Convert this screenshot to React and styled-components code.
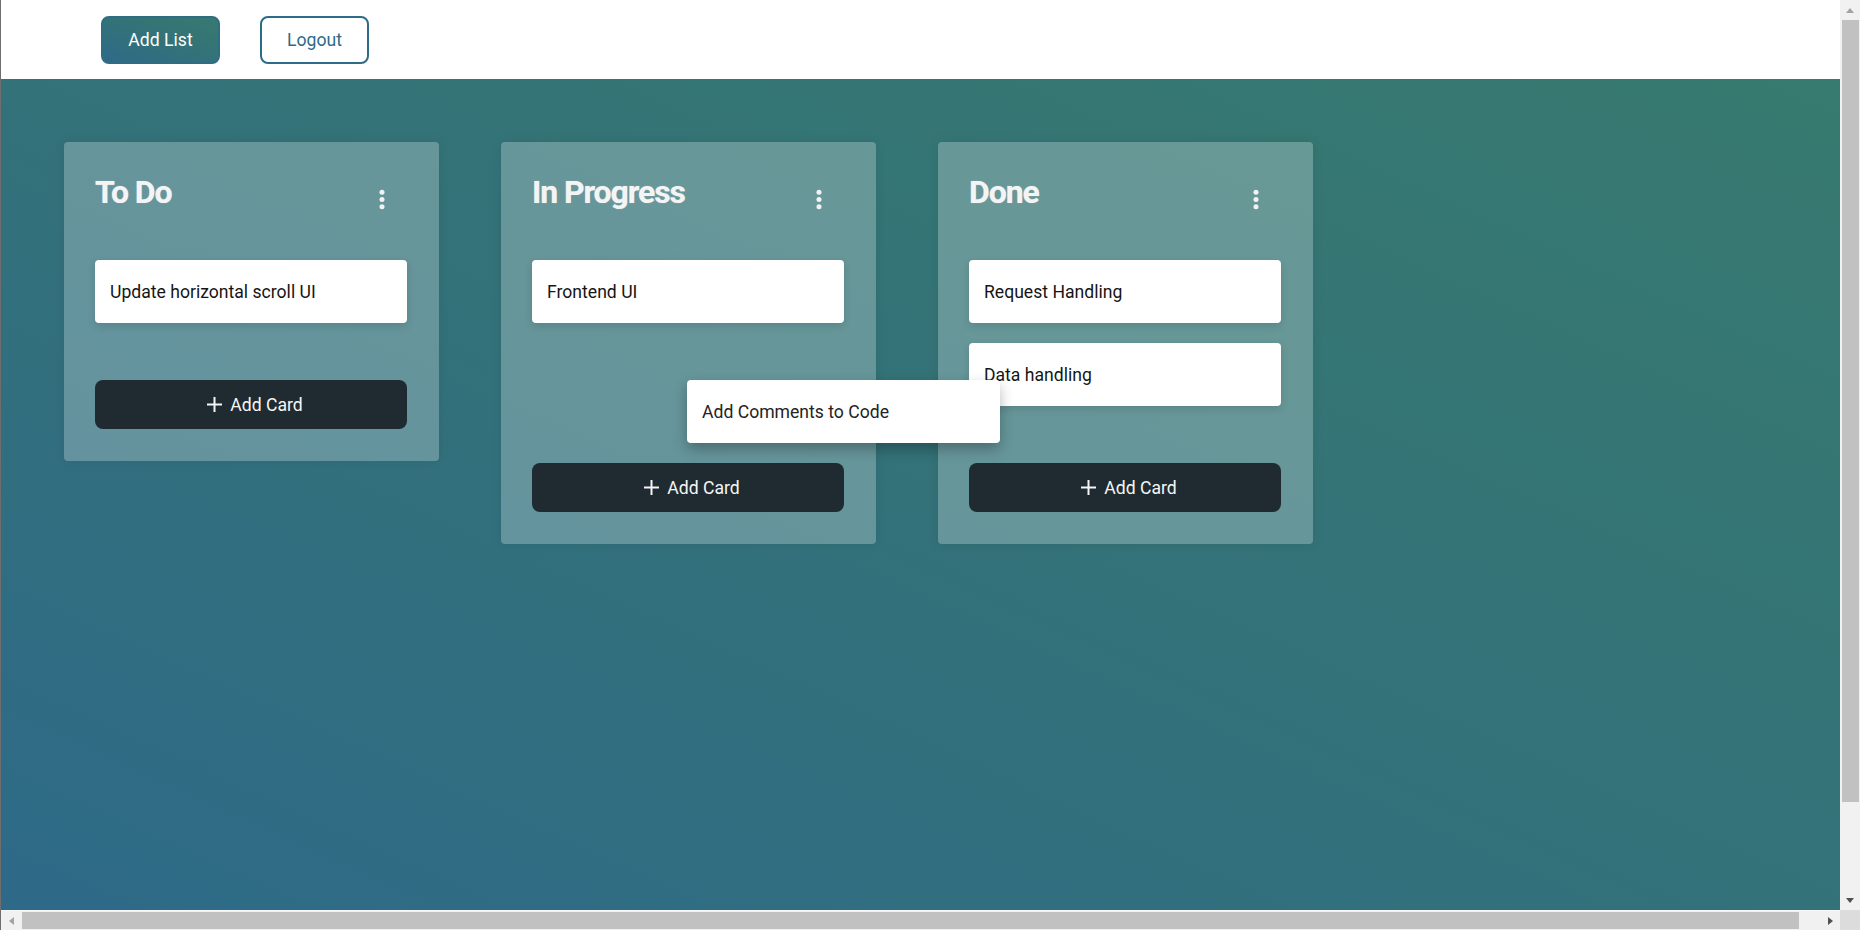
import React from "react";
import styled, { createGlobalStyle } from "styled-components";

const GlobalStyle = createGlobalStyle`
  html, body {
    margin: 0;
    padding: 0;
    overflow: hidden;
  }
  body {
    font-family: Roboto, "Liberation Sans", Arial, sans-serif;
  }
  * {
    box-sizing: border-box;
  }
`;

const BOARD_GRADIENT = "linear-gradient(to top right, #2e6a88 0%, #337279 50%, #377a6f 100%)";
const FONT = 'Roboto, "Liberation Sans", Arial, sans-serif';

const Page = styled.div`
  width: 100vw;
  height: 100vh;
  display: grid;
  grid-template-columns: 1fr 20px;
  grid-template-rows: 1fr 20px;
  border-left: 1px solid #6e6e6e;
  overflow: hidden;
`;

const Main = styled.div`
  display: flex;
  flex-direction: column;
  overflow: hidden;
  min-height: 0;
`;

const TopBar = styled.div`
  height: 79px;
  flex: none;
  background: #ffffff;
  display: flex;
  align-items: center;
  gap: 40px;
  padding-left: 100px;
`;

const HeaderButton = styled.button`
  height: 48px;
  width: ${(p) => (p.$outline ? "109px" : "119px")};
  padding: 0;
  border-radius: 8px;
  font-family: ${FONT};
  font-size: 17.6px;
  cursor: pointer;
  color: ${(p) => (p.$outline ? "#2e6a8a" : "#ffffff")};
  background: ${(p) => (p.$outline ? "#ffffff" : BOARD_GRADIENT)};
  border: 2px solid ${(p) => (p.$outline ? "#2e6a8a" : "#2f6d84")};
`;

const Board = styled.div`
  flex: 1;
  background: ${BOARD_GRADIENT};
  display: flex;
  align-items: flex-start;
  gap: 62px;
  padding: 63px 0 0 63px;
`;

const List = styled.div`
  position: relative;
  width: 375px;
  flex: none;
  padding: 31px 32px 32px 31px;
  background: rgba(255, 255, 255, 0.25);
  border-radius: 4px;
  box-shadow: 0 0 12px rgba(0, 0, 0, 0.08);
`;

const ListHeader = styled.div`
  display: flex;
  justify-content: space-between;
  align-items: flex-start;
  margin-bottom: 49px;
`;

const ListTitle = styled.h2`
  margin: 0;
  font-size: 32px;
  line-height: 38px;
  font-weight: 700;
  color: #f4f4f4;
  letter-spacing: -1.1px;
  text-shadow: 0 0 1px rgba(255, 255, 255, 0.5);
`;

const MenuButton = styled.button`
  background: none;
  border: none;
  padding: 0;
  margin: 14.5px 22px 0 0;
  cursor: pointer;
  display: flex;

  & > svg {
    height: 23px;
    width: 6px;
  }
`;

const Cards = styled.div`
  display: flex;
  flex-direction: column;
  gap: 20px;
  margin-bottom: 57px;
`;

const Card = styled.div`
  height: 63px;
  display: flex;
  align-items: center;
  padding: 0 15px;
  background: #ffffff;
  border-radius: 4px;
  font-size: 17.6px;
  color: #151515;
  box-shadow: 0 3px 8px rgba(0, 0, 0, 0.12);
`;

const Placeholder = styled.div`
  height: 63px;
`;

const DragCard = styled(Card)`
  position: absolute;
  left: 186px;
  top: 238px;
  width: 313px;
  z-index: 10;
  color: #232323;
  box-shadow: 0 6px 14px rgba(0, 0, 0, 0.28);
`;

const AddCardButton = styled.button`
  width: 100%;
  height: 49px;
  border: none;
  border-radius: 8px;
  background: #1f2b31;
  color: #f5f5f5;
  font-family: ${FONT};
  font-size: 17.6px;
  display: flex;
  align-items: center;
  justify-content: center;
  gap: 8px;
  padding: 0 0 0 8px;
  cursor: pointer;

  & > svg {
    width: 15px;
    height: 15px;
  }
`;

/* browser scrollbars as they appear in the capture */
const VScroll = styled.div`
  background: #f1f1f1;
  display: flex;
  flex-direction: column;
  align-items: center;
`;

const HScroll = styled.div`
  background: #f1f1f1;
  border-top: 1px solid #f8f8f8;
  display: flex;
  align-items: center;
`;

const Corner = styled.div`
  background: #dcdcdc;
`;

const ArrowBox = styled.div`
  width: 20px;
  height: 20px;
  flex: none;
  display: flex;
  align-items: center;
  justify-content: center;
  margin-top: ${(p) => (p.$push ? "auto" : "0")};
  margin-left: ${(p) => (p.$pushX ? "auto" : "0")};
`;

const arrowShapes = {
  up: (c) => `border-left: 4.5px solid transparent; border-right: 4.5px solid transparent; border-bottom: 5px solid ${c};`,
  down: (c) => `border-left: 4.5px solid transparent; border-right: 4.5px solid transparent; border-top: 5px solid ${c};`,
  left: (c) => `border-top: 4.5px solid transparent; border-bottom: 4.5px solid transparent; border-right: 5px solid ${c};`,
  right: (c) => `border-top: 4.5px solid transparent; border-bottom: 4.5px solid transparent; border-left: 5px solid ${c};`,
};

const Arrow = styled.span`
  width: 0;
  height: 0;
  ${(p) => arrowShapes[p.$dir](p.$active ? "#505050" : "#a3a3a3")}
`;

const Thumb = styled.div`
  background: #c1c1c1;
  flex: none;
  ${(p) =>
    p.$vertical
      ? "width: 17px; height: 782px; margin-left: 1px;"
      : "height: 17px; width: 1777px; margin-left: 1px;"}
`;

function Kebab() {
  return (
    <svg viewBox="0 0 128 512" fill="#f2f2f2">
      <circle cx="64" cy="96" r="56" />
      <circle cx="64" cy="256" r="56" />
      <circle cx="64" cy="416" r="56" />
    </svg>
  );
}

function PlusIcon() {
  return (
    <svg viewBox="0 0 15 15" fill="none" stroke="#f5f5f5" strokeWidth="2">
      <path d="M7.5 0v15M0 7.5h15" />
    </svg>
  );
}

const lists = [
  { title: "To Do", cards: ["Update horizontal scroll UI"] },
  { title: "In Progress", cards: ["Frontend UI"], dragging: "Add Comments to Code" },
  { title: "Done", cards: ["Request Handling", "Data handling"] },
];

export default function App() {
  return (
    <>
      <GlobalStyle />
      <Page>
        <Main>
          <TopBar>
            <HeaderButton>Add List</HeaderButton>
            <HeaderButton $outline>Logout</HeaderButton>
          </TopBar>
          <Board>
            {lists.map((list) => (
              <List key={list.title}>
                <ListHeader>
                  <ListTitle>{list.title}</ListTitle>
                  <MenuButton>
                    <Kebab />
                  </MenuButton>
                </ListHeader>
                <Cards>
                  {list.cards.map((c) => (
                    <Card key={c}>{c}</Card>
                  ))}
                  {list.dragging && <Placeholder />}
                </Cards>
                <AddCardButton>
                  <PlusIcon />
                  Add Card
                </AddCardButton>
                {list.dragging && <DragCard>{list.dragging}</DragCard>}
              </List>
            ))}
          </Board>
        </Main>
        <VScroll>
          <ArrowBox>
            <Arrow $dir="up" />
          </ArrowBox>
          <Thumb $vertical />
          <ArrowBox $push>
            <Arrow $dir="down" $active />
          </ArrowBox>
        </VScroll>
        <HScroll>
          <ArrowBox>
            <Arrow $dir="left" />
          </ArrowBox>
          <Thumb />
          <ArrowBox $pushX>
            <Arrow $dir="right" $active />
          </ArrowBox>
        </HScroll>
        <Corner />
      </Page>
    </>
  );
}
